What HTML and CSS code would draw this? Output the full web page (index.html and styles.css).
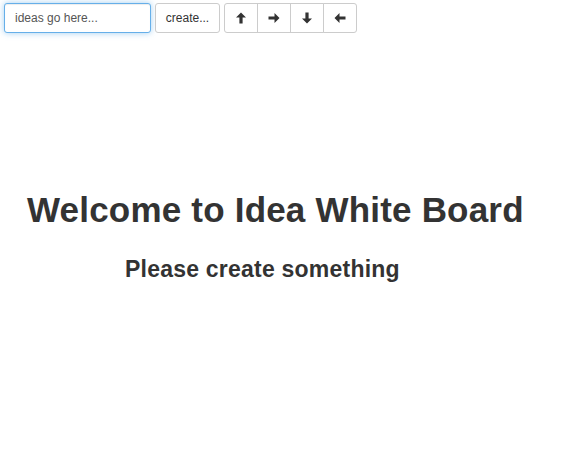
FILE: index.html
```html
<!DOCTYPE html>
<html>
<head>
<meta charset="utf-8">
<link rel="stylesheet" href="styles.css">
</head>
<body>
<div class="toolbar">
  <input class="idea-input" type="text" placeholder="ideas go here...">
  <button class="btn create">create...</button>
  <div class="btn-group">
    <button class="btn icon" aria-label="up"><svg width="12" height="12" viewBox="0 0 12 12"><path d="M6 0.5 L11 5.5 L7.6 5.5 L7.6 11.5 L4.4 11.5 L4.4 5.5 L1 5.5 Z" fill="#333"/></svg></button>
    <button class="btn icon" aria-label="right"><svg width="12" height="12" viewBox="0 0 12 12"><path d="M11.5 6 L6.5 11 L6.5 7.6 L0.5 7.6 L0.5 4.4 L6.5 4.4 L6.5 1 Z" fill="#333"/></svg></button>
    <button class="btn icon" aria-label="down"><svg width="12" height="12" viewBox="0 0 12 12"><path d="M6 11.5 L11 6.5 L7.6 6.5 L7.6 0.5 L4.4 0.5 L4.4 6.5 L1 6.5 Z" fill="#333"/></svg></button>
    <button class="btn icon" aria-label="left"><svg width="12" height="12" viewBox="0 0 12 12"><path d="M0.5 6 L5.5 11 L5.5 7.6 L11.5 7.6 L11.5 4.4 L5.5 4.4 L5.5 1 Z" fill="#333"/></svg></button>
  </div>
</div>
<div class="board">
  <h1 class="title">Welcome to Idea White Board</h1>
  <h2 class="subtitle">Please create something</h2>
</div>
</body>
</html>
```

FILE: styles.css
```css
html, body {
  margin: 0;
  padding: 0;
  background: #fff;
  font-family: "Liberation Sans", Arial, sans-serif;
  color: #333;
}
.toolbar {
  display: flex;
  align-items: flex-start;
  gap: 4px;
  padding: 3px 4px 0 4px;
}
.idea-input {
  box-sizing: border-box;
  width: 147px;
  height: 30px;
  padding: 5px 10px;
  font-family: inherit;
  font-size: 12px;
  color: #555;
  border: 1px solid #66afe9;
  border-radius: 3px;
  box-shadow: inset 0 1px 1px rgba(0,0,0,.075), 0 0 6px rgba(102,175,233,.6);
  outline: none;
  margin: 0;
}
.idea-input::placeholder {
  color: #555;
  opacity: 1;
}
.btn {
  box-sizing: border-box;
  height: 30px;
  padding: 5px 10px;
  font-family: inherit;
  font-size: 12px;
  line-height: 18px;
  color: #333;
  background: #fff;
  border: 1px solid #ccc;
  border-radius: 3px;
  margin: 0;
  display: flex;
  align-items: center;
  justify-content: center;
}
.create {
  width: 65px;
}
.btn-group {
  display: flex;
}
.btn-group .icon {
  width: 34px;
  border-radius: 0;
  margin-left: -1px;
}
.btn-group .icon:first-child {
  margin-left: 0;
  border-radius: 3px 0 0 3px;
}
.btn-group .icon:last-child {
  border-radius: 0 3px 3px 0;
}
.title {
  margin: 158px 0 0 27px;
  font-size: 35px;
  font-weight: bold;
  line-height: 1.1;
  letter-spacing: 0.2px;
}
.subtitle {
  margin: 27px 0 0 125px;
  font-size: 23px;
  font-weight: bold;
  line-height: 1.1;
  letter-spacing: 0.22px;
}
```
